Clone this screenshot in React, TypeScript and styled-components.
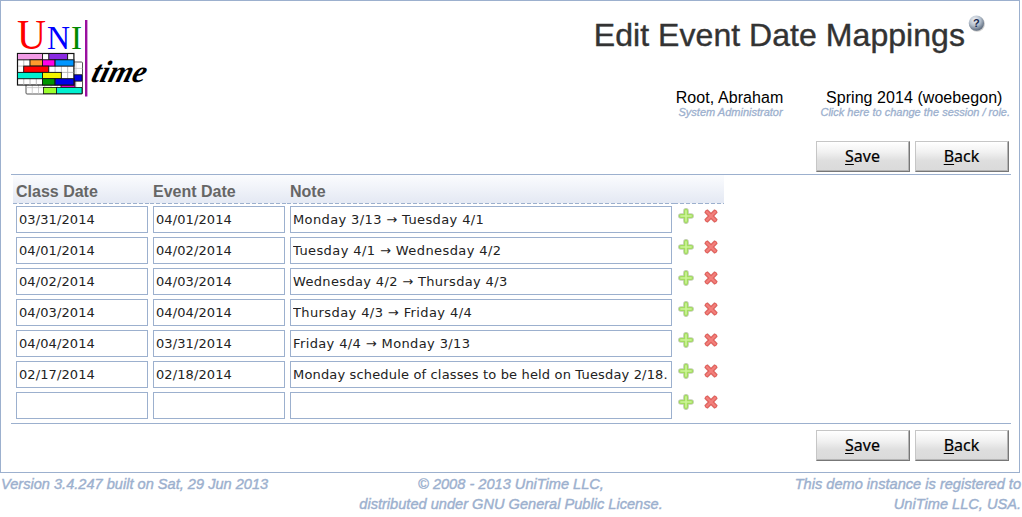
import React from "react";
import styled, { createGlobalStyle } from "styled-components";

const LINE = "#9cb0ce";

const GlobalStyle = createGlobalStyle`
  *, *::before, *::after { box-sizing: border-box; }
  body { margin: 0; background: #fff; font-family: "Liberation Sans", Arial, sans-serif; }
`;

const Page = styled.div`
  width: 1022px;
  height: 517px;
  overflow: hidden;
`;

const Frame = styled.main`
  width: 1020px;
  height: 473px;
  border: 1px solid ${LINE};
  padding: 0 8px 0 10px;
`;

const Header = styled.header`
  height: 140px;
  display: flex;
  justify-content: space-between;
`;

const Logo = styled.svg`
  display: block;
  margin: 10px 0 0 4px;
  overflow: visible;
`;

const Heading = styled.div`
  display: flex;
  flex-direction: column;
  align-items: flex-end;
`;

const TitleRow = styled.div`
  display: flex;
  align-items: flex-start;
  padding: 13px 25px 0 0;
  height: 87px;
`;

const Title = styled.h1`
  margin: 2px 3px 0 0;
  font-size: 32px;
  line-height: 38px;
  font-weight: 400;
  letter-spacing: 0.05px;
  color: #333;
  -webkit-text-stroke: 0.4px #333;
  white-space: nowrap;
`;

const Session = styled.div`
  display: flex;
  gap: 36px;
  padding-right: 2px;
`;

const SessionItem = styled.div`
  display: flex;
  flex-direction: column;
  align-items: center;
  white-space: nowrap;
`;

const SessionValue = styled.span<{ $spacing: number }>`
  font-size: 16px;
  line-height: 20px;
  letter-spacing: ${(p) => p.$spacing}px;
  color: #000;
`;

const SessionHint = styled.span`
  margin: 0 -1px 0 1px;
  font-size: 11px;
  line-height: 8px;
  font-style: italic;
  color: ${LINE};
  -webkit-text-stroke: 0.3px ${LINE};
`;

const Actions = styled.div<{ $bottom?: boolean }>`
  display: flex;
  justify-content: flex-end;
  gap: 5px;
  height: ${(p) => (p.$bottom ? 38 : 33)}px;
  padding: ${(p) => (p.$bottom ? 6 : 0)}px 2px 0 0;
`;

const Button = styled.button`
  width: 94px;
  height: 31px;
  padding: 0 1px 1px 0;
  border: 1px solid;
  border-color: #c6c6c6 #777 #777 #c6c6c6;
  box-shadow: inset -1px -1px 0 #b4b4b4;
  background: linear-gradient(#fff 0%, #f1f1f1 35%, #dedede 65%, #dadada 100%);
  font: 16px/28px "Noto Sans", sans-serif;
  -webkit-text-stroke: 0.2px #000;
  color: #000;
  text-underline-offset: 2px;
`;

const AccessKey = styled.u`
  text-decoration-thickness: 1px;
`;

const Section = styled.section`
  width: 1000px;
  height: 250px;
  border-top: 1px solid ${LINE};
  border-bottom: 1px solid ${LINE};
  padding-left: 2px;
`;

const Row = styled.div`
  display: grid;
  grid-template-columns: 137px 137px 387px 25px 25px;
  width: 711px;
  height: 31px;
  padding-top: 2px;
`;

const HeadRow = styled(Row)`
  height: 29px;
  padding: 0;
  background: linear-gradient(#fbfcfe, #e3e8f3);
`;

const HeadCell = styled.div`
  padding: 6px 0 1px 3px;
  background: repeating-linear-gradient(90deg, ${LINE} 0 4px, #f4f6fa 4px 6px) bottom / 100% 1px no-repeat;
  font-size: 16px;
  line-height: 22px;
  font-weight: 700;
  color: #666;
`;

const Field = styled.input<{ $spacing?: number }>`
  height: 27px;
  margin: 0 2px 0 3px;
  min-width: 0;
  padding: 0 2px 1px;
  border: 1px solid ${LINE};
  outline: none;
  font: 13px "DejaVu Sans", sans-serif;
  letter-spacing: ${(p) => p.$spacing ?? 0.1}px;
  color: #222;
  background: #fff;
`;

const IconButton = styled.span`
  display: block;
  padding: 2px 0 0 4px;
  height: 20px;
`;

const Footer = styled.footer`
  display: grid;
  grid-template-columns: 1fr 1fr 1fr;
  width: 1022px;
  padding: 1px 1px 0;
  font-size: 14.6px;
  line-height: 20px;
  font-style: italic;
  color: ${LINE};
  -webkit-text-stroke: 0.4px ${LINE};
  white-space: nowrap;
`;

const FooterText = styled.div<{ $align: "left" | "center" | "right" }>`
  text-align: ${(p) => p.$align};
`;

type Block = [x: number, y: number, w: number, color: string];

const backBlocks: Block[] = [
  [46, 8, 12, "#ffff00"],
  [46, 14.3, 21, "#0000e6"],
  [46, 20.6, 14, "#e600c8"],
  [28.5, 26.9, 13, "#9cff2e"],
  [41.5, 26.9, 25.5, "#00f0d0"],
];

const frontBlocks: Block[] = [
  [0, 0, 25, "#f29ce6"],
  [31.3, 0, 18.8, "#8a2be2"],
  [12.5, 6.3, 12.5, "#ff9a2e"],
  [25, 6.3, 12.5, "#ff00e6"],
  [37.6, 6.3, 18.8, "#0096ff"],
  [6.2, 12.6, 25, "#ff0000"],
  [0, 18.9, 25, "#00f0d0"],
  [25, 18.9, 18.8, "#f5f500"],
  [25, 25.2, 12.5, "#009600"],
  [37.6, 25.2, 18.8, "#0000e6"],
];

const cols = [1, 2, 3, 4, 5, 6, 7, 8];
const rows = [1, 2, 3, 4];

function Timetable() {
  return (
    <>
      <rect x="11" y="46" width="56.5" height="32" rx="1" fill="#fff" stroke="#555" strokeWidth="1" />
      {cols.map((c) => (
        <path key={c} d={`M${11 + c * 6.25} 46V78`} stroke="#bbb" strokeWidth=".7" />
      ))}
      {rows.map((r) => (
        <path key={r} d={`M11 ${46 + r * 6.4}H67.5`} stroke="#bbb" strokeWidth=".7" />
      ))}
      {backBlocks.map(([x, y, w, color]) => (
        <rect key={`${x}-${y}`} x={x} y={y + 44.5} width={w} height="6.3" fill={color} stroke="#111" strokeWidth=".8" />
      ))}
      <rect x="2.5" y="37.5" width="56.4" height="31.5" fill="#fff" stroke="#111" strokeWidth="1.2" />
      {cols.map((c) => (
        <path key={c} d={`M${2.5 + c * 6.27} 38V69`} stroke="#aaa" strokeWidth=".8" />
      ))}
      {rows.map((r) => (
        <path key={r} d={`M3 ${37.5 + r * 6.3}H58.5`} stroke="#aaa" strokeWidth=".8" />
      ))}
      {frontBlocks.map(([x, y, w, color]) => (
        <rect key={`${x}-${y}`} x={x + 2.5} y={y + 37.5} width={w} height="6.3" fill={color} stroke="#111" strokeWidth=".9" />
      ))}
    </>
  );
}

function UniTimeLogo() {
  return (
    <Logo width="140" height="94" viewBox="0 -5 140 94">
      <g fontFamily="Liberation Serif, serif">
        <text x="2" y="33" fontSize="43" fill="#f00" textLength="29" lengthAdjust="spacingAndGlyphs">U</text>
        <text x="32" y="33" fontSize="33" fill="#00f" textLength="23" lengthAdjust="spacingAndGlyphs">N</text>
        <text x="56" y="33" fontSize="33" fill="#008a00" textLength="11" lengthAdjust="spacingAndGlyphs">I</text>
      </g>
      <Timetable />
      <rect x="70" y="4" width="2.4" height="76.5" fill="#9a0f9f" />
      <text
        x="0"
        y="0"
        transform="translate(75 65.5) skewX(-16)"
        fontFamily="Liberation Serif, serif"
        fontSize="31"
        fontWeight="700"
        fontStyle="italic"
        textLength="54"
        lengthAdjust="spacingAndGlyphs"
      >
        time
      </text>
    </Logo>
  );
}

function HelpIcon() {
  return (
    <svg width="18" height="18" viewBox="0 0 18 18">
      <defs>
        <radialGradient id="ball" cx=".4" cy=".3" r=".75">
          <stop offset="0" stopColor="#f2f4f7" />
          <stop offset=".5" stopColor="#b4bfcc" />
          <stop offset="1" stopColor="#4e5c70" />
        </radialGradient>
      </defs>
      <circle cx="9.1" cy="10" r="7.8" fill="#aaa" opacity=".6" />
      <circle cx="8.4" cy="9.1" r="7.7" fill="url(#ball)" />
      <text x="8.3" y="12.8" textAnchor="middle" fontFamily="Liberation Sans, sans-serif" fontSize="11" fontWeight="700" fill="#17294d">?</text>
    </svg>
  );
}

function AddIcon() {
  return (
    <svg width="16" height="16" viewBox="0 0 16 16">
      <path d="M8 2.9V13.1M2.9 8H13.1" stroke="#c3cdb4" strokeWidth="5.6" strokeLinecap="round" />
      <path d="M8 2.9V13.1M2.9 8H13.1" stroke="#a3dc60" strokeWidth="4.2" strokeLinecap="round" />
      <path d="M8 2.9V13.1M2.9 8H13.1" stroke="#cdf598" strokeWidth="1.6" strokeLinecap="round" />
    </svg>
  );
}

function DeleteIcon() {
  return (
    <svg width="16" height="16" viewBox="0 0 16 16">
      <path d="M4 4L12 12M12 4L4 12" stroke="#d9aaa6" strokeWidth="5.8" strokeLinecap="square" transform="translate(1.1 1.1) scale(.86)" />
      <path d="M4 4L12 12M12 4L4 12" stroke="#e2605c" strokeWidth="4.4" strokeLinecap="round" />
      <path d="M4 4L12 12M12 4L4 12" stroke="#f2807c" strokeWidth="2.2" strokeLinecap="round" />
    </svg>
  );
}

function ActionBar({ bottom }: { bottom?: boolean }) {
  return (
    <Actions $bottom={bottom}>
      <Button><AccessKey>S</AccessKey>ave</Button>
      <Button><AccessKey>B</AccessKey>ack</Button>
    </Actions>
  );
}

type Mapping = { classDate: string; eventDate: string; note: string; spacing: number };

const mappings: Mapping[] = [
  { classDate: "03/31/2014", eventDate: "04/01/2014", note: "Monday 3/13 → Tuesday 4/1", spacing: 0.38 },
  { classDate: "04/01/2014", eventDate: "04/02/2014", note: "Tuesday 4/1 → Wednesday 4/2", spacing: 0.41 },
  { classDate: "04/02/2014", eventDate: "04/03/2014", note: "Wednesday 4/2 → Thursday 4/3", spacing: 0.34 },
  { classDate: "04/03/2014", eventDate: "04/04/2014", note: "Thursday 4/3 → Friday 4/4", spacing: 0.4 },
  { classDate: "04/04/2014", eventDate: "03/31/2014", note: "Friday 4/4 → Monday 3/13", spacing: 0.38 },
  {
    classDate: "02/17/2014",
    eventDate: "02/18/2014",
    note: "Monday schedule of classes to be held on Tuesday 2/18.",
    spacing: 0.16,
  },
  { classDate: "", eventDate: "", note: "", spacing: 0 },
];

export default function App() {
  return (
    <Page>
      <GlobalStyle />
      <Frame>
        <Header>
          <UniTimeLogo />
          <Heading>
            <TitleRow>
              <Title>Edit Event Date Mappings</Title>
              <HelpIcon />
            </TitleRow>
            <Session>
              <SessionItem>
                <SessionValue $spacing={0.08}>Root, Abraham</SessionValue>
                <SessionHint>System Administrator</SessionHint>
              </SessionItem>
              <SessionItem>
                <SessionValue $spacing={0.06}>Spring 2014 (woebegon)</SessionValue>
                <SessionHint>Click here to change the session / role.</SessionHint>
              </SessionItem>
            </Session>
          </Heading>
        </Header>
        <ActionBar />
        <Section>
          <HeadRow>
            <HeadCell>Class Date</HeadCell>
            <HeadCell>Event Date</HeadCell>
            <HeadCell>Note</HeadCell>
            <HeadCell />
            <HeadCell />
          </HeadRow>
          {mappings.map(({ classDate, eventDate, note, spacing }, i) => (
            <Row key={i}>
              <Field defaultValue={classDate} />
              <Field defaultValue={eventDate} />
              <Field defaultValue={note} $spacing={spacing} />
              <IconButton><AddIcon /></IconButton>
              <IconButton><DeleteIcon /></IconButton>
            </Row>
          ))}
        </Section>
        <ActionBar bottom />
      </Frame>
      <Footer>
        <FooterText $align="left">Version 3.4.247 built on Sat, 29 Jun 2013</FooterText>
        <FooterText $align="center">
          © 2008 - 2013 UniTime LLC,
          <br />
          distributed under GNU General Public License.
        </FooterText>
        <FooterText $align="right">
          This demo instance is registered to
          <br />
          UniTime LLC, USA.
        </FooterText>
      </Footer>
    </Page>
  );
}
